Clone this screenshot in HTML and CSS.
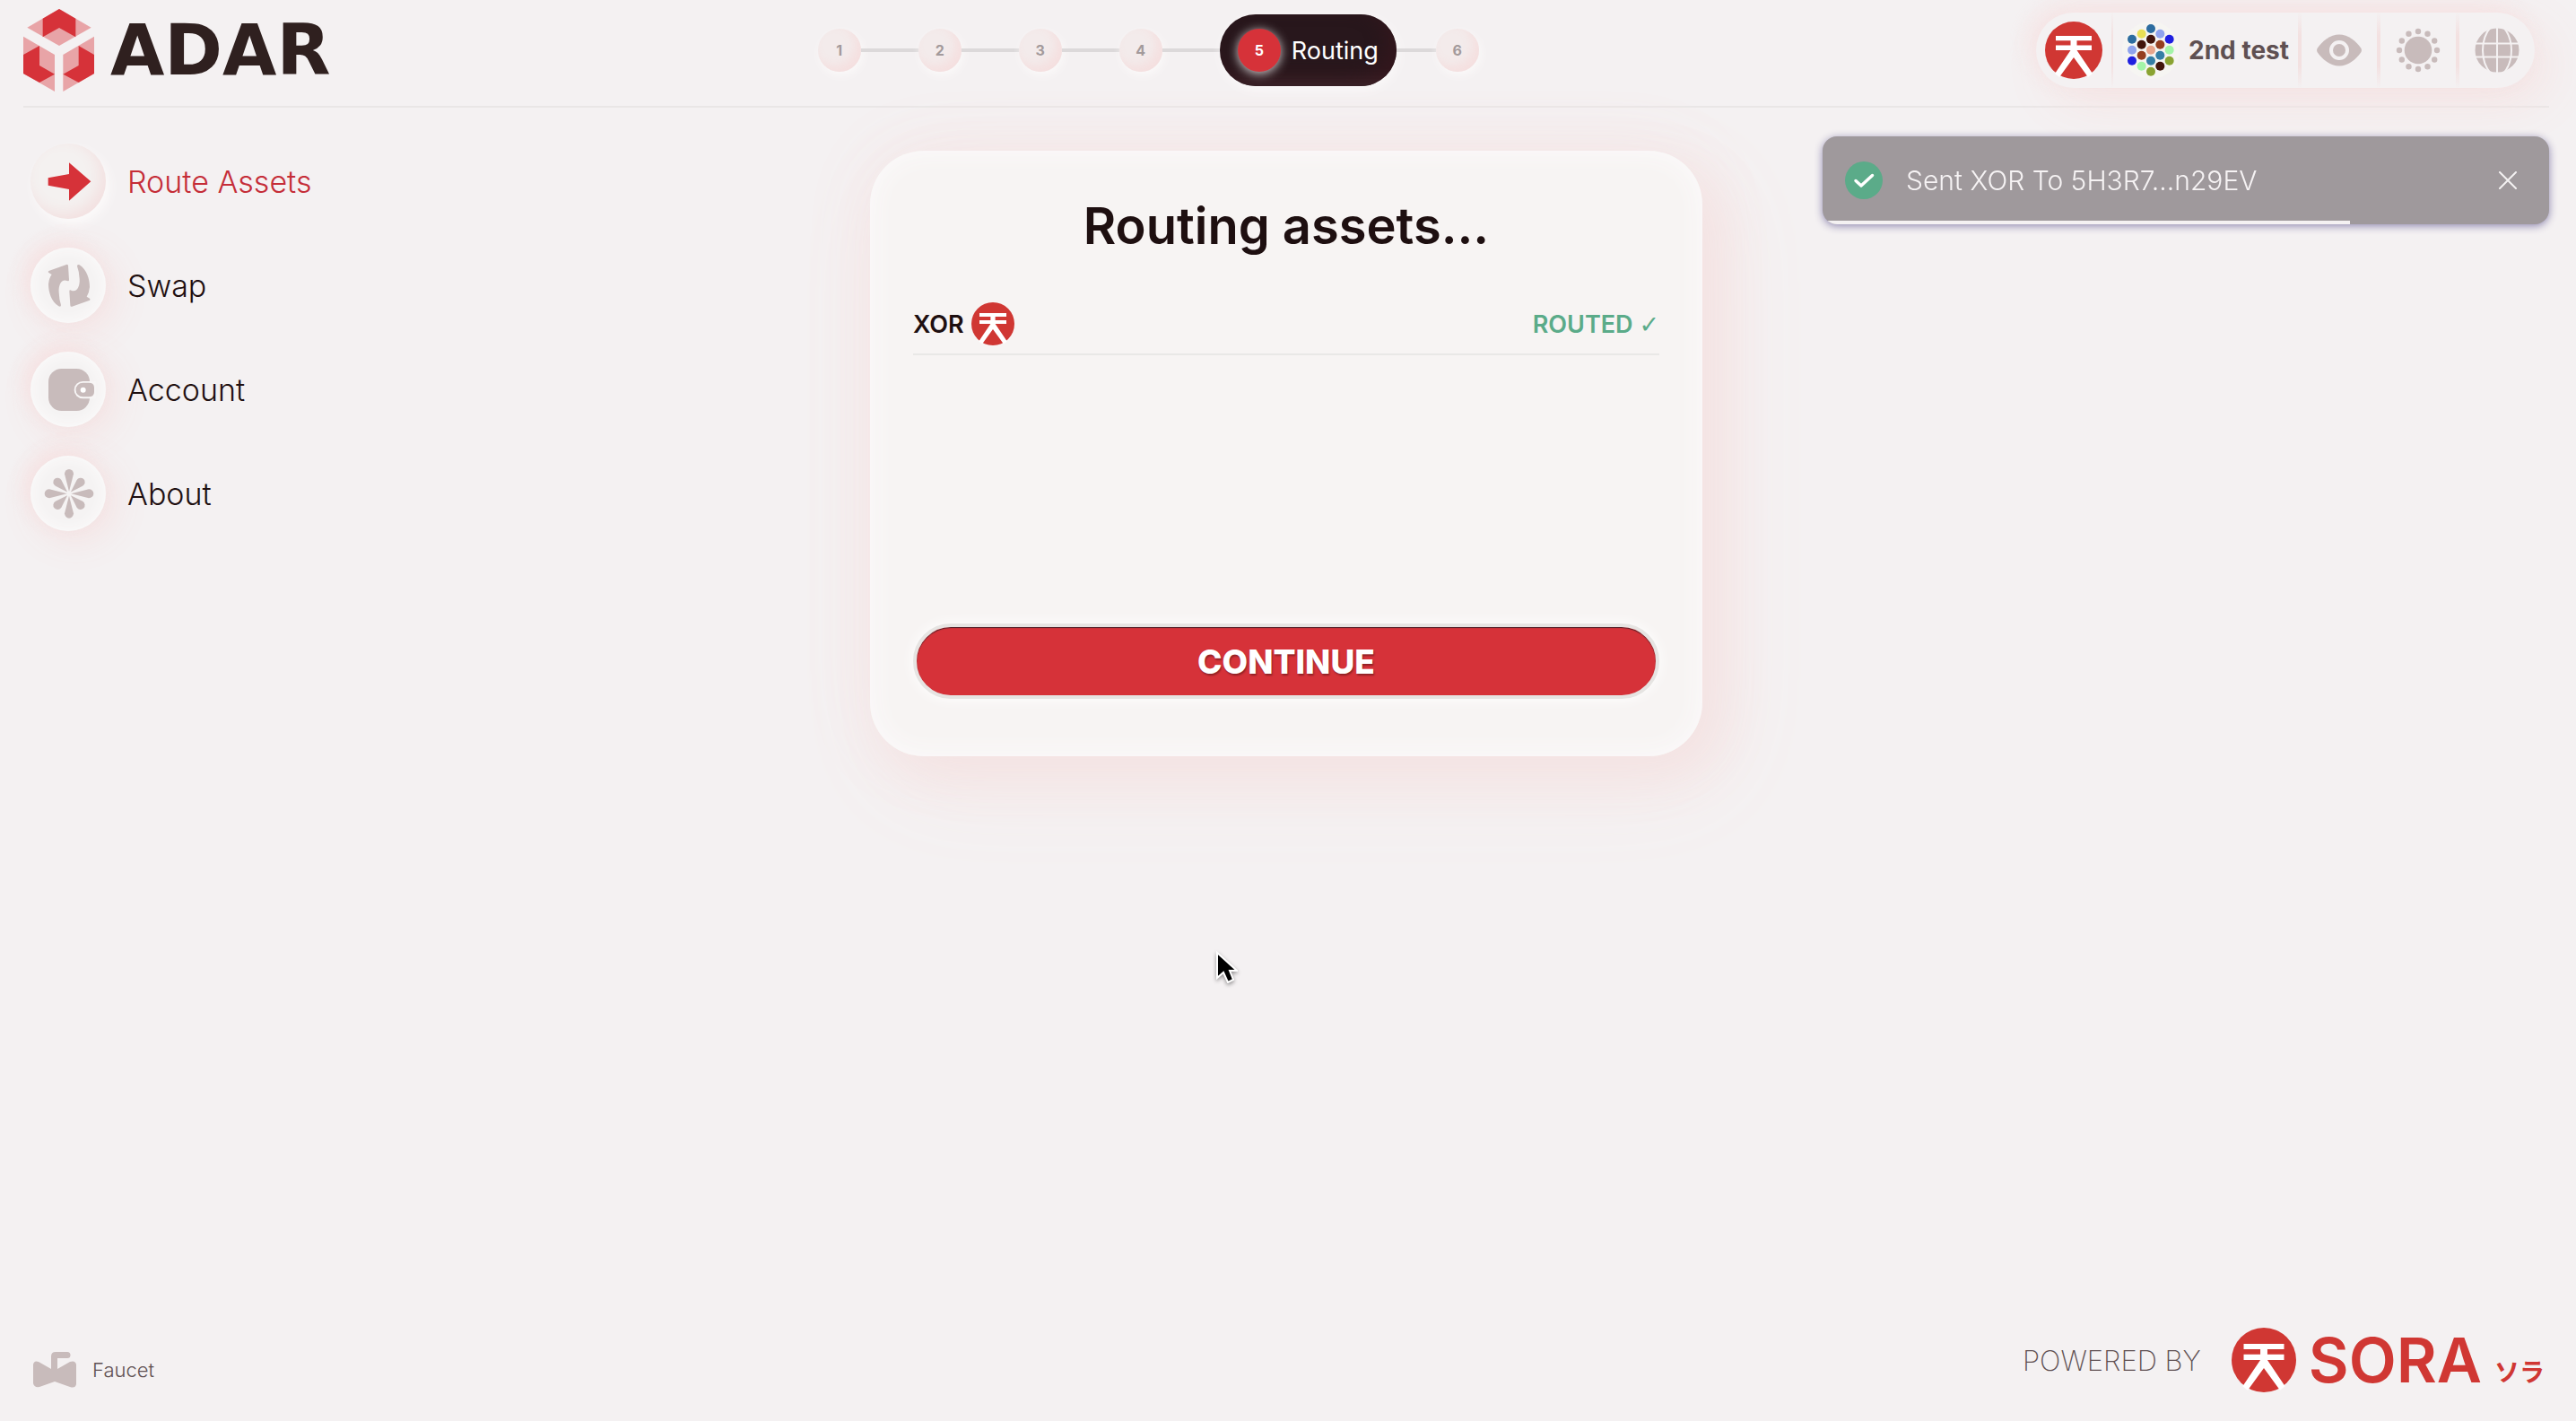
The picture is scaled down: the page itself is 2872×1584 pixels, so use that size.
FILE: index.html
```html
<!DOCTYPE html>
<html lang="en">
<head>
<meta charset="utf-8">
<meta name="viewport" content="width=device-width, initial-scale=1">
<title>ADAR – Routing assets</title>
<link rel="stylesheet" href="styles.css">
</head>
<body>
<svg class="defs" aria-hidden="true">
  <symbol id="sora" viewBox="0 0 64 64">
    <circle cx="32" cy="32" r="32" fill="#d03733"/>
    <path fill="#fff" d="M12 16H52V21.300H35.500V26.500H52V32H35.500L53 58 48 62 32 40 16 62 11 58 28.500 32H12V26.500H28.500V21.300H12Z"/>
  </symbol>
</svg>

<header class="header">
  <a class="brand" href="#">
    <svg class="brand-mark" viewBox="78 30 237 276" aria-hidden="true">
      <g fill="#e8a4a7">
        <path d="M198 30 305 92 198 153 91 92Z"/>
        <path d="M78 122 183 183V306L78 246Z"/>
        <path d="M315 122 211 183V306L315 246Z"/>
      </g>
      <g fill="#d63239">
        <path d="M198 30 253 62V124L198 93 143 124V62Z"/>
        <path d="M78 183 132 153V219L183 248 132 276 78 246Z"/>
        <path d="M315 183 263 153V219L211 248 263 276 315 246Z"/>
      </g>
    </svg>
    <span class="brand-name">ADAR</span>
  </a>

  <ol class="stepper">
    <li class="step"><span class="dot">1</span></li>
    <li class="step"><span class="dot">2</span></li>
    <li class="step"><span class="dot">3</span></li>
    <li class="step"><span class="dot">4</span></li>
    <li class="step current" aria-current="step"><span class="pill"><span class="dot">5</span>Routing</span></li>
    <li class="step last"><span class="dot">6</span></li>
  </ol>

  <div class="toolbar">
    <button class="tool" type="button" aria-label="Network"><svg class="tool-logo"><use href="#sora"/></svg></button>
    <button class="tool account" type="button">
      <svg class="identicon" viewBox="-12 42 192 192" aria-hidden="true">
        <circle cx="84" cy="138" r="96" fill="#f6f5f2"/>
        <circle cx="84" cy="66" r="15" fill="#2d6da0"/>
        <circle cx="53" cy="83" r="15" fill="#e9df55"/>
        <circle cx="115" cy="83" r="15" fill="#8fa3ee"/>
        <circle cx="21" cy="101" r="15" fill="#2d6da0"/>
        <circle cx="84" cy="101" r="15" fill="#42150c"/>
        <circle cx="146" cy="101" r="15" fill="#1f1fe0"/>
        <circle cx="53" cy="119" r="15" fill="#42150c"/>
        <circle cx="115" cy="119" r="15" fill="#953f20"/>
        <circle cx="21" cy="137" r="15" fill="#8fa3ee"/>
        <circle cx="84" cy="137" r="15" fill="#e8a58c"/>
        <circle cx="146" cy="137" r="15" fill="#a3f5a8"/>
        <circle cx="53" cy="155" r="15" fill="#953f20"/>
        <circle cx="115" cy="155" r="15" fill="#357ea5"/>
        <circle cx="21" cy="173" r="15" fill="#1f1fe0"/>
        <circle cx="84" cy="173" r="15" fill="#357ea5"/>
        <circle cx="146" cy="173" r="15" fill="#8aa332"/>
        <circle cx="53" cy="191" r="15" fill="#a3f5a8"/>
        <circle cx="115" cy="191" r="15" fill="#42150c"/>
        <circle cx="84" cy="209" r="15" fill="#8aa332"/>
      </svg>
      <span>2nd test</span>
    </button>
    <button class="tool" type="button" aria-label="Hide balances">
      <svg class="tool-icon" viewBox="-28 -28 56 56">
        <path fill="#c8bbbb" d="M-24.500-2C-19-10-10-17.500 0-17.500S19-10 24.500-2Q25.500 0 24.500 2C19 10 10 17.500 0 17.500S-19 10-24.500 2Q-25.500 0-24.500-2Z"/>
        <circle r="9" fill="#c8bbbb" stroke="#f4f1f2" stroke-width="4"/>
      </svg>
    </button>
    <button class="tool" type="button" aria-label="Theme">
      <svg class="tool-icon" viewBox="-28 -28 56 56" fill="#c8bbbb">
        <circle r="15.300"/>
        <circle cy="-21" r="3.200"/><circle cy="21" r="3.200"/><circle cx="-21" r="3.200"/><circle cx="21" r="3.200"/>
        <circle cx="10.500" cy="-18.200" r="3.200"/><circle cx="18.200" cy="-10.500" r="3.200"/>
        <circle cx="18.200" cy="10.500" r="3.200"/><circle cx="10.500" cy="18.200" r="3.200"/>
        <circle cx="-10.500" cy="18.200" r="3.200"/><circle cx="-18.200" cy="10.500" r="3.200"/>
        <circle cx="-18.200" cy="-10.500" r="3.200"/><circle cx="-10.500" cy="-18.200" r="3.200"/>
      </svg>
    </button>
    <button class="tool" type="button" aria-label="Language">
      <svg class="tool-icon" viewBox="-28 -28 56 56">
        <circle r="24.500" fill="#c8bbbb"/>
        <path fill="none" stroke="#f4f1f2" stroke-width="2" d="M0-26V26M-26-7.500H26M-26 7.500H26M-7-26C-19-12-19 12-7 26M7-26C19-12 19 12 7 26"/>
      </svg>
    </button>
  </div>
</header>

<div class="content">
  <nav class="nav">
    <a class="nav-link active" href="#">
      <svg class="nav-icon" viewBox="102 90 252 252" aria-hidden="true"><path fill="#d63239" d="M161 205 231 192V154L304 217 231 281V243L161 230Z"/></svg>
      Route Assets
    </a>
    <a class="nav-link" href="#">
      <svg class="nav-icon" viewBox="102 438 252 252" aria-hidden="true" fill="#c8bbbb">
        <path d="M163 516 222 495Q228 493 228 499L231 546Q231 552 225 549C206 541 195 562 197 588Q198 612 204 630 204 638 196 634C171 617 162 586 162 560Q164 540 173 528L163 522Q159 519 163 516Z"/>
        <path d="M300 614 241 635Q235 637 235 631L232 584Q232 578 238 581C257 589 268 568 266 542Q265 518 258 500 258 492 266 496C291 513 300 544 300 570Q298 590 290 602L300 608Q303 611 300 614Z"/>
      </svg>
      Swap
    </a>
    <a class="nav-link" href="#">
      <svg class="nav-icon" viewBox="102 786 252 252" aria-hidden="true" fill="#c8bbbb">
        <rect x="162" y="843" width="138" height="141" rx="44"/>
        <path fill="#f8f6f6" d="M277 885H320V943H277A29 29 0 0 1 277 885Z"/>
        <path d="M277 890H297Q315 890 315 906V921Q315 937 297 937H277A23 23 0 0 1 277 890Z"/>
        <circle cx="278" cy="914" r="9" fill="#fff"/>
      </svg>
      Account
    </a>
    <a class="nav-link" href="#">
      <svg class="nav-icon" viewBox="-129 -127 252 252" aria-hidden="true" fill="#c8bbbb">
        <g id="petals">
          <path d="M0-7-15-66A15 16 0 1 1 15-66Z"/>
          <path transform="rotate(45)" d="M0-8-14-50A14.500 15 0 1 1 14-50Z"/>
        </g>
        <use href="#petals" transform="rotate(90)"/>
        <use href="#petals" transform="rotate(180)"/>
        <use href="#petals" transform="rotate(270)"/>
      </svg>
      About
    </a>
  </nav>

  <main class="card">
    <h1 class="title">Routing assets...</h1>
    <ul class="assets">
      <li class="asset">
        <span class="asset-name">XOR <svg class="asset-logo" aria-hidden="true"><use href="#sora"/></svg></span>
        <span class="asset-status">ROUTED <span class="check">✓</span></span>
      </li>
    </ul>
    <button class="continue" type="button">CONTINUE</button>
  </main>
</div>

<footer class="footer">
  <a class="faucet" href="#">
    <svg class="faucet-icon" viewBox="0 0 48 40" aria-hidden="true" fill="#c8bbbb">
      <path d="M6 11 20 19V5Q20 0 25 0H38A3.500 3.500 0 0 1 38 7H27V19L41 11Q47 9 48 14V36Q47 41 41 39L24 33 7 39Q1 40 0 35V14Q1 9 6 11Z"/>
    </svg>
    Faucet
  </a>
  <a class="powered" href="#">
    <span class="powered-by">POWERED BY</span>
    <svg class="powered-logo" aria-hidden="true"><use href="#sora"/></svg>
    <span class="sora-name">SORA</span>
    <span class="sora-kana" lang="ja">ソラ</span>
  </a>
</footer>

<div class="toast" role="status">
  <svg class="toast-icon" viewBox="0 0 42 42" aria-hidden="true">
    <circle cx="21" cy="21" r="21" fill="#5bab89"/>
    <path d="M12 21.500 18 27 30.500 15.500" fill="none" stroke="#fff" stroke-width="3.500" stroke-linecap="round" stroke-linejoin="round"/>
  </svg>
  <span class="toast-text">Sent XOR To 5H3R7...n29EV</span>
  <button class="toast-close" type="button" aria-label="Close">
    <svg class="close-icon" viewBox="0 0 20 20"><path d="M1 1 19 19M19 1 1 19" stroke="#f4f1f2" stroke-width="2" stroke-linecap="round"/></svg>
  </button>
  <span class="toast-progress"></span>
</div>

<svg class="cursor" viewBox="0 0 24 36" aria-hidden="true">
  <path d="M1 2V30L8 24 13 35 19 32 15 22H23Z" fill="#000" stroke="#fff" stroke-width="2"/>
</svg>
</body>
</html>
```

FILE: styles.css
```css
* {
  box-sizing: border-box;
}

body {
  margin: 0;
  min-height: 100vh;
  display: flex;
  flex-direction: column;
  padding: 0 30px 32px 26px;
  background: #f4f1f2;
  color: #1e0f10;
  font-family: Inter, "Noto Sans CJK JP", sans-serif;
  font-size: 24px;
}

button {
  border: 0;
  padding: 0;
  background: none;
  color: inherit;
  font: inherit;
}

a {
  color: inherit;
  text-decoration: none;
}

ol,
ul {
  list-style: none;
  margin: 0;
  padding: 0;
}

svg {
  display: block;
  flex: none;
}

.defs {
  position: absolute;
  width: 0;
  height: 0;
}

/* Header */
.header {
  display: flex;
  align-items: center;
  height: 120px;
  padding: 0 16px 6px 0;
  border-bottom: 2px solid #e9e6e6;
}

.brand {
  display: flex;
  align-items: center;
  gap: 18px;
}

.brand-mark {
  width: 79px;
  height: 92px;
}

.brand-name {
  color: #2f201f;
  font-family: "DejaVu Sans", sans-serif;
  font-size: 78px;
  font-weight: 700;
  line-height: 92px;
}

.stepper {
  display: flex;
  align-items: center;
  margin: 0 auto;
  padding-right: 78px;
}

.step {
  display: flex;
  align-items: center;
}

.step + .step::before {
  content: "";
  width: 64px;
  height: 4px;
  background: #dcd9da;
}

.step.last::before {
  width: 44px;
}

.dot {
  display: grid;
  place-items: center;
  width: 48px;
  height: 48px;
  border-radius: 50%;
  background: #f3ebeb;
  box-shadow: inset -6px -6px 12px #f5dfdf, 2px 4px 10px #fbf9f9;
  color: #a39a9b;
  font-size: 16px;
  font-weight: 700;
}

.pill {
  display: flex;
  align-items: center;
  gap: 12px;
  height: 80px;
  padding: 0 20px;
  border-radius: 40px;
  background: #28171c;
  box-shadow: inset -10px -10px 20px #33171d, 2px 4px 12px #fbf9f9;
  color: #fff;
  font-size: 27px;
}

.pill .dot {
  background: #d63239;
  box-shadow: 0 2px 12px #ffffffcc;
  color: #fff;
}

.toolbar {
  display: flex;
  height: 84px;
  border-radius: 42px;
  background: #f4f1f2;
  box-shadow: -8px -8px 24px #f6dcdc99, 16px 16px 56px #f5e3e3;
}

.tool {
  display: flex;
  align-items: center;
  justify-content: center;
  gap: 10px;
  width: 84px;
}

.tool + .tool {
  width: 88px;
  border-left: 4px solid;
  border-image: linear-gradient(#f4f1f2, #f3e1e1 30%, #f3e1e1 70%, #f4f1f2) 1;
}

.tool + .tool.account {
  width: auto;
  padding: 0 10px;
  border-left-width: 2px;
  color: #5f5052;
  font-size: 28px;
  font-weight: 700;
}

.tool-logo,
.identicon {
  width: 64px;
  height: 64px;
}

.tool-icon {
  width: 56px;
  height: 56px;
}

/* Content */
.content {
  display: grid;
  grid-template-columns: 1fr 928px 1fr;
  align-items: start;
}

.nav {
  display: flex;
  flex-direction: column;
  align-items: flex-start;
  gap: 32px;
  padding: 40px 0 0 8px;
}

.nav-link {
  display: flex;
  align-items: center;
  gap: 24px;
  font-size: 34px;
  font-weight: 300;
}

.nav-icon {
  width: 84px;
  height: 84px;
  border-radius: 50%;
  background: #f5f3f3;
  box-shadow: inset 0 0 16px #fdfcfc, -8px -8px 20px #f6dcdc99, 8px 8px 44px #f5dfdf;
}

.nav-link.active {
  color: #c52d38;
}

.active .nav-icon {
  background: #f4f1f0;
  box-shadow: inset -6px -6px 16px #f3e0e0, 4px 6px 12px #fcfafa;
}

.card {
  display: flex;
  flex-direction: column;
  margin-top: 48px;
  padding: 48px 48px 64px;
  border-radius: 60px;
  background: #f7f4f3;
  box-shadow: inset 0 0 30px #fcfbfc, 20px 20px 60px #f4e2e2, 20px 30px 110px #f5ebea, 0 0 80px #f4e7e8;
}

.title {
  margin: 0 0 49px;
  font-size: 56px;
  font-weight: 600;
  line-height: 72px;
  text-align: center;
}

.assets {
  min-height: 358px;
}

.asset {
  display: flex;
  align-items: center;
  justify-content: space-between;
  padding-bottom: 9px;
  border-bottom: 2px solid #e9e8e6;
  font-size: 27px;
  font-weight: 600;
}

.asset-name {
  display: flex;
  align-items: center;
  gap: 8px;
}

.asset-logo {
  width: 48px;
  height: 48px;
}

.asset-status {
  color: #5bab89;
}

.check {
  font-family: "DejaVu Sans", sans-serif;
  font-weight: 700;
}

.continue {
  height: 84px;
  border: 4px solid #e6e4e2;
  border-radius: 42px;
  background: #d63239;
  box-shadow: 0 0 16px #fff, inset 0 1px 1px #4a2028;
  color: #fff;
  font-size: 37px;
  font-weight: 800;
  text-shadow: 1px 2px 2px #00000055;
}

/* Footer */
.footer {
  display: flex;
  align-items: center;
  justify-content: space-between;
  margin-top: auto;
  padding: 0 5px 0 11px;
  color: #5f5052;
}

.faucet {
  display: flex;
  align-items: center;
  gap: 18px;
  padding-top: 22px;
  font-size: 22px;
  font-weight: 300;
}

.faucet-icon {
  width: 48px;
  height: 40px;
}

.powered {
  display: flex;
  align-items: center;
}

.powered-by {
  margin-right: 34px;
  font-size: 31px;
  font-weight: 200;
}

.powered-logo {
  width: 72px;
  height: 72px;
  margin-right: 14px;
}

.sora-name {
  margin-right: 14px;
  color: #d03733;
  font-size: 69px;
  font-weight: 600;
  line-height: 72px;
}

.sora-kana {
  align-self: flex-end;
  color: #d03733;
  font-size: 28px;
  font-weight: 700;
  line-height: 44px;
}

/* Overlays */
.toast {
  position: fixed;
  top: 152px;
  right: 30px;
  display: flex;
  align-items: center;
  gap: 26px;
  width: 810px;
  height: 98px;
  padding: 0 36px 0 25px;
  border-radius: 16px;
  background: #9f999c;
  box-shadow: 0 2px 10px #8f88b0;
  color: #f6f3f4;
  font-size: 30px;
  font-weight: 300;
  overflow: hidden;
}

.toast-icon {
  width: 42px;
  height: 42px;
}

.toast-close {
  margin-left: auto;
}

.close-icon {
  width: 20px;
  height: 20px;
}

.toast-progress {
  position: absolute;
  left: 0;
  bottom: 0;
  width: 588px;
  height: 4px;
  background: #f4f1f2;
}

.cursor {
  position: fixed;
  left: 1356px;
  top: 1060px;
  width: 24px;
  height: 36px;
  filter: drop-shadow(0 2px 2px #00000066);
}
```
